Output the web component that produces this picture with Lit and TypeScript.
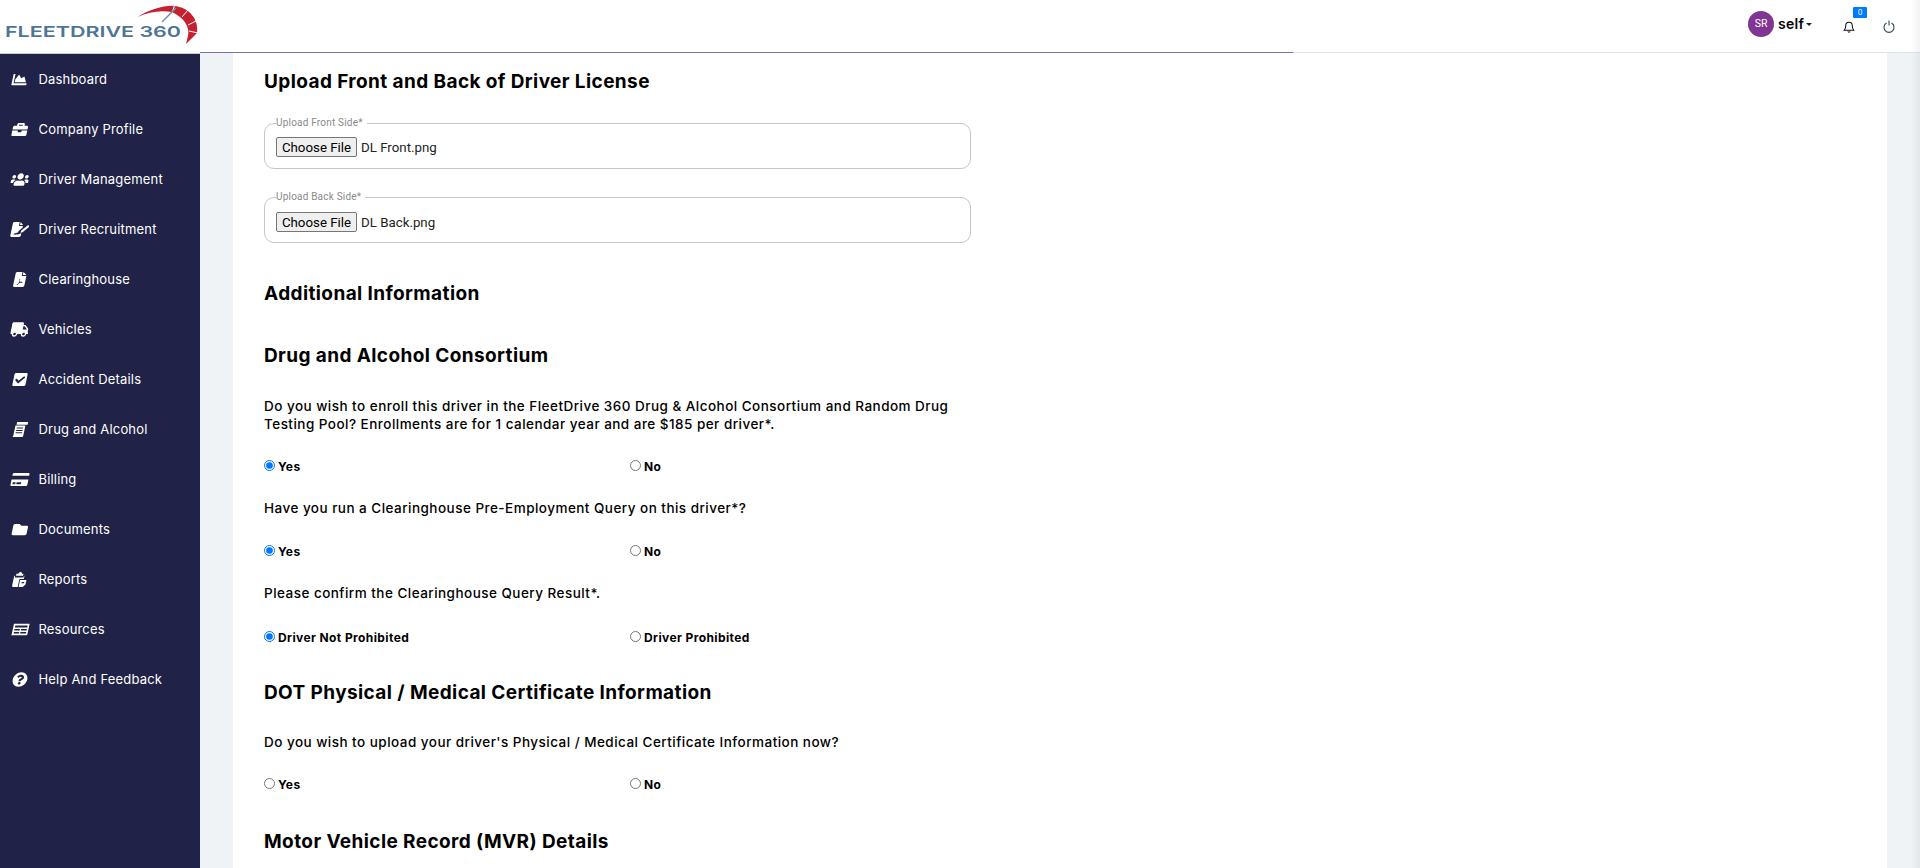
import { LitElement, html, css, svg } from 'lit';
import { customElement } from 'lit/decorators.js';

type NavItem = {
  name: string
  box: string
  icon: ReturnType<typeof svg>
}

const nav: NavItem[] = [
  { name: 'Dashboard', box: '0 0 512 512', icon: svg`<path d="M500 384c6.600 0 12 5.400 12 12v40c0 6.600-5.400 12-12 12H12c-6.600 0-12-5.400-12-12V76c0-6.600 5.400-12 12-12h40c6.600 0 12 5.400 12 12v308h436zM372.700 159.500L288 216l-85.300-113.700c-5.100-6.800-15.500-6.300-19.900 1L96 248v104h384l-89.900-187.800c-3.200-6.500-11.400-8.700-17.400-4.700z"/>` },
  { name: 'Company Profile', box: '0 0 512 512', icon: svg`<path d="M320 336c0 8.840-7.160 16-16 16h-96c-8.840 0-16-7.160-16-16v-48H0v144c0 25.600 22.400 48 48 48h416c25.600 0 48-22.400 48-48V288H320v48zm144-208h-80V80c0-25.600-22.400-48-48-48H176c-25.600 0-48 22.400-48 48v48H48c-25.600 0-48 22.400-48 48v80h512v-80c0-25.600-22.400-48-48-48zm-144 0H192V96h128v32z"/>` },
  { name: 'Driver Management', box: '0 0 640 512', icon: svg`<path d="M96 224c35.300 0 64-28.700 64-64s-28.700-64-64-64-64 28.700-64 64 28.700 64 64 64zm448 0c35.300 0 64-28.700 64-64s-28.700-64-64-64-64 28.700-64 64 28.700 64 64 64zm32 32h-64c-17.600 0-33.500 7.100-45.100 18.600 40.300 22.100 68.900 62 75.100 109.400h66c17.700 0 32-14.300 32-32v-32c0-35.300-28.700-64-64-64zm-256 0c61.900 0 112-50.100 112-112S381.900 32 320 32 208 82.100 208 144s50.100 112 112 112zm76.800 32h-8.300c-20.800 10-43.900 16-68.500 16s-47.600-6-68.500-16h-8.300C179.600 288 128 339.600 128 403.200V432c0 26.500 21.500 48 48 48h288c26.500 0 48-21.500 48-48v-28.800c0-63.600-51.600-115.200-115.200-115.200zm-223.700-13.400C161.500 263.100 145.600 256 128 256H64c-35.300 0-64 28.700-64 64v32c0 17.700 14.300 32 32 32h65.900c6.300-47.400 34.900-87.300 75.200-109.400z"/>` },
  { name: 'Driver Recruitment', box: '0 0 576 512', icon: svg`<path d="M0 48C0 22 22 0 48 0h176v112c0 13 11 24 24 24h112v60L250 306l-8 60c-30-18-50 0-62 30-14-24-40-30-60 0l-20 30 30 12 18-20c14 22 36 30 56 4 18 8 44 8 70-2l86-34v78c0 26-22 48-48 48H48c-26 0-48-22-48-48zM256 0l104 104H256zM566 130c14 14 14 36 0 50l-170 170-70 14 14-70 170-170c14-14 36-14 50 0z"/>` },
  { name: 'Clearinghouse', box: '0 0 384 512', icon: svg`<path fill-rule="evenodd" d="M48 0h176v112c0 13 11 24 24 24h136v328c0 26-22 48-48 48H48c-26 0-48-22-48-48V48C0 22 22 0 48 0zM256 0l128 104H256zM190 230c-16 0-20 20-6 60 8 24 4 50-14 90-30 18-62 40-50 56 16 14 44-16 66-56 36-12 70-16 90-14 24 4 32-20 10-28-26-6-60 2-78-12-16-22-4-96-18-96z"/>` },
  { name: 'Vehicles', box: '0 0 640 512', icon: svg`<path d="M624 352h-16V243.900c0-12.700-5.100-24.900-14.100-33.900L494 110.100c-9-9-21.200-14.100-33.900-14.100H416V48c0-26.500-21.500-48-48-48H48C21.500 0 0 21.500 0 48v320c0 26.500 21.500 48 48 48h16c0 53 43 96 96 96s96-43 96-96h128c0 53 43 96 96 96s96-43 96-96h48c8.800 0 16-7.200 16-16v-32c0-8.800-7.200-16-16-16zM160 464c-26.500 0-48-21.500-48-48s21.500-48 48-48 48 21.500 48 48-21.500 48-48 48zm320 0c-26.500 0-48-21.500-48-48s21.500-48 48-48 48 21.500 48 48-21.500 48-48 48zm80-208H416V144h44.100l99.900 99.900V256z"/>` },
  { name: 'Accident Details', box: '0 0 448 512', icon: svg`<path d="M400 480H48c-26.510 0-48-21.490-48-48V80c0-26.510 21.490-48 48-48h352c26.510 0 48 21.490 48 48v352c0 26.510-21.490 48-48 48zm-204.686-98.059l184-184c6.248-6.248 6.248-16.379 0-22.627l-22.627-22.627c-6.248-6.248-16.379-6.249-22.628 0L184 302.745l-70.059-70.059c-6.248-6.248-16.379-6.248-22.628 0l-22.627 22.627c-6.248 6.248-6.248 16.379 0 22.627l104 104c6.249 6.250 16.379 6.250 22.628.001z"/>` },
  { name: 'Drug and Alcohol', box: '0 0 448 512', icon: svg`<path fill-rule="evenodd" d="M70 0h378v90H70zM40 120h340v350c0 24-20 42-44 42H0c24 0 40-18 40-42zM100 190v34h220v-34zM100 270v34h220v-34zM100 350v34h220v-34z"/>` },
  { name: 'Billing', box: '0 0 576 512', icon: svg`<path d="M0 432c0 26.500 21.500 48 48 48h480c26.500 0 48-21.500 48-48V256H0v176zm192-68c0-6.600 5.400-12 12-12h136c6.600 0 12 5.400 12 12v40c0 6.600-5.400 12-12 12H204c-6.600 0-12-5.400-12-12v-40zm-128 0c0-6.600 5.400-12 12-12h72c6.600 0 12 5.400 12 12v40c0 6.600-5.400 12-12 12H76c-6.600 0-12-5.400-12-12v-40zM576 80v48H0V80c0-26.500 21.500-48 48-48h480c26.500 0 48 21.500 48 48z"/>` },
  { name: 'Documents', box: '0 0 512 512', icon: svg`<path d="M464 128H272l-64-64H48C21.490 64 0 85.490 0 112v288c0 26.510 21.490 48 48 48h416c26.510 0 48-21.490 48-48V176c0-26.510-21.490-48-48-48z"/>` },
  { name: 'Reports', box: '0 0 448 512', icon: svg`<path fill-rule="evenodd" d="M60 60h70C130 26 156 0 190 0s60 26 60 60h50v70H60zM0 130h30v60h300v-60h20v110H230c-20 0-30 10-30 30v242H40c-22 0-40-18-40-40zM230 270h218v160l-80 82H230zM300 340v40h90v-40z"/>` },
  { name: 'Resources', box: '0 0 576 512', icon: svg`<path fill-rule="evenodd" d="M40 60h536v350c0 26-20 46-46 46H0c26 0 40-20 40-46zM100 120v70h420v-70zM100 240v50h180v-50zM320 240v50h200v-50zM100 340v50h180v-50zM320 340v50h200v-50z"/>` },
  { name: 'Help And Feedback', box: '0 0 512 512', icon: svg`<path d="M504 256c0 136.997-111.043 248-248 248S8 392.997 8 256C8 119.083 119.043 8 256 8s248 111.083 248 248zM262.655 90c-54.497 0-89.255 22.957-116.549 63.758-3.536 5.286-2.353 12.415 2.715 16.258l34.699 26.311c5.205 3.947 12.621 3.008 16.665-2.122 17.864-22.658 30.113-35.797 57.303-35.797 20.429 0 45.698 13.148 45.698 32.958 0 14.976-12.363 22.667-32.534 33.976C247.128 238.528 216 254.941 216 296v4c0 6.627 5.373 12 12 12h56c6.627 0 12-5.373 12-12v-1.333c0-28.462 83.186-29.647 83.186-106.667 0-58.002-60.165-102-116.531-102zM256 338c-25.365 0-46 20.635-46 46 0 25.364 20.635 46 46 46s46-20.636 46-46c0-25.365-20.635-46-46-46z"/>` },
]

@customElement('app-root')
export class AppRoot extends LitElement {

  static styles = css`
    :host {
      display: block;
      position: relative;
      height: 868px;
      overflow: hidden;
      background: #fff;
      font-family: Inter, "Open Sans", sans-serif;
      color: #000;
    }
    :host * {
      box-sizing: border-box;
    }

    /* soft shade down the right edge of the window */
    .edge {
      position: absolute;
      top: 0;
      right: 0;
      bottom: 0;
      width: 9px;
      z-index: 2;
      background: linear-gradient(to right, rgba(0, 0, 0, 0), rgba(0, 0, 0, 0.05));
      pointer-events: none;
    }

    .header {
      display: flex;
      height: 53px;
      position: relative;
      z-index: 1;
    }
    .brand {
      width: 200px;
      height: 54px;
      flex: none;
      background: #fff;
      border-bottom: 1px solid #ccc;
    }
    .brand svg {
      display: block;
    }
    .logo-text {
      font-family: Inter, sans-serif;
      font-weight: 600;
      font-size: 15px;
      fill: #4f7595;
    }
    .topbar {
      flex: 1;
      display: flex;
      align-items: center;
      justify-content: flex-end;
      border-bottom: 1px solid #dde4ea;
      position: relative;
      padding-right: 25px;
    }
    .progress {
      position: absolute;
      left: 0;
      bottom: -1px;
      width: 1093px;
      height: 1px;
      background: #7a71ae;
    }
    .avatar {
      width: 26px;
      height: 26px;
      border-radius: 50%;
      background: #7f3592;
      color: #fff;
      font-family: Roboto, sans-serif;
      font-size: 10.5px;
      display: flex;
      align-items: center;
      justify-content: center;
      margin-top: -5px;
    }
    .self {
      width: 25px;
      font-size: 14px;
      font-weight: 600;
      letter-spacing: 0.3px;
      margin: -5px 0 0 4px;
    }
    .caret {
      width: 0;
      height: 0;
      border: 3px solid transparent;
      border-top: 3px solid #222;
      border-bottom: 0;
      margin: -4px 0 0 3px;
    }
    .bell {
      position: relative;
      margin-left: 31px;
      display: flex;
    }
    .badge {
      position: absolute;
      left: 10px;
      top: -13px;
      width: 14px;
      height: 11px;
      border-radius: 1px;
      background: #007bff;
      color: #fff;
      font-size: 7.5px;
      line-height: 11px;
      text-align: center;
    }
    .power {
      margin-left: 28px;
      display: flex;
    }

    .body {
      display: flex;
      height: 815px;
    }
    .sidebar {
      width: 200px;
      flex: none;
      margin-top: 1px;
      background: #202347;
    }
    .nav-item {
      display: flex;
      align-items: center;
      height: 50px;
      padding-left: 11px;
      color: #fff;
      font-size: 13px;
      letter-spacing: 0.18px;
    }
    .nav-icon {
      width: 27.5px;
      flex: none;
      display: flex;
    }
    .nav-icon svg {
      width: 18px;
      height: 15px;
      fill: #fff;
      transform: skewX(-12deg);
    }

    .main {
      flex: 1;
      background: #eff3f6;
      padding: 0 33px;
    }
    .card {
      height: 100%;
      background: #fff;
      padding: 18px 0 0 31px;
    }

    h2 {
      margin: 40px 0 0;
      font-size: 19px;
      line-height: 22px;
      font-weight: 700;
      letter-spacing: 0.4px;
    }
    h2.first {
      margin-top: 0;
    }
    h2.dot {
      margin-top: 36px;
    }
    h2.mvr {
      margin-top: 38px;
    }
    .q {
      margin: 24px 0 0;
      font-size: 13.5px;
      line-height: 18px;
      font-weight: 500;
      letter-spacing: 0.47px;
      white-space: nowrap;
    }
    .q.lead {
      margin-top: 30px;
    }
    .q.dot {
      margin-top: 29px;
    }

    fieldset {
      width: 707px;
      height: 52px;
      margin: 22px 0 0;
      padding: 0 11px;
      border: 1px solid #c6c6c6;
      border-radius: 10px;
      display: flex;
      align-items: center;
    }
    fieldset.top {
      margin-top: 24px;
    }
    legend {
      padding: 0 4px 0 0;
      margin-left: 0;
      font-family: Roboto, sans-serif;
      font-size: 10px;
      line-height: 12px;
      color: #8a8a8a;
      letter-spacing: 0.2px;
    }
    .file-row {
      display: flex;
      align-items: center;
      margin-top: -1px;
      font-family: Roboto, sans-serif;
      font-size: 13.3px;
      color: #222;
    }
    fieldset.top .file-row {
      margin-top: -3px;
    }
    .file-btn {
      width: 81px;
      height: 20px;
      padding: 0;
      margin-right: 4px;
      border: 1px solid #767676;
      border-radius: 2px;
      background: #efefef;
      color: #000;
      font: inherit;
    }

    .radios {
      display: grid;
      grid-template-columns: 366px 366px;
      margin-top: 24px;
      height: 18px;
      align-items: center;
    }
    .radios.wide {
      margin-top: 25px;
    }
    .radios.widest {
      margin-top: 26px;
    }
    .radios label {
      display: flex;
      align-items: center;
      font-size: 12px;
      font-weight: 700;
      letter-spacing: 0.4px;
    }
    .radios input {
      width: 11px;
      height: 11px;
      margin: -2px 3px 0 0;
    }
  `;

  renderRadios(name: string, a: string, b: string, checked: boolean, cls = '') {
    return html`
      <div class="radios ${cls}">
        <label><input type="radio" name=${name} ?checked=${checked} />${a}</label>
        <label><input type="radio" name=${name} />${b}</label>
      </div>
    `
  }

  renderUpload(label: string, file: string, top = false) {
    return html`
      <fieldset class=${top ? 'top' : ''}>
        <legend>${label}</legend>
        <div class="file-row"><button class="file-btn">Choose File</button>${file}</div>
      </fieldset>
    `
  }

  render() {
    return html`
      <div class="edge"></div>
      <div class="header">
        <div class="brand">
          <svg width="200" height="53" viewBox="0 0 200 53">
            <text class="logo-text" x="5" y="36.500" textLength="176" lengthAdjust="spacingAndGlyphs">FLEETDRIVE 360</text>
            <path d="M138 17C150 9 165 5 175 6C190 8 199 20 197 33L186 44L188 36C190 28 185 18 172 12C160 10 148 12 138 17Z" fill="#c5202f"/>
            <path d="M175 4L172 13M188 10L182 17M196 21L188 25M198 33L189 31" stroke="#fff" stroke-width="1" fill="none"/>
            <path d="M162 22L176 8" stroke="#6f8fa9" stroke-width="1.500" fill="none"/>
          </svg>
        </div>
        <div class="topbar">
          <div class="progress"></div>
          <div class="avatar">SR</div>
          <div class="self">self</div>
          <div class="caret"></div>
          <div class="bell">
            <svg width="12" height="13" viewBox="0 0 12 14" fill="none" stroke="#111" stroke-width="1.100">
              <path d="M1 11c1-1 1.500-2 1.500-5a3.500 3.500 0 0 1 7 0c0 3 .5 4 1.500 5z"/>
              <path d="M4.700 12.300a1.400 1.400 0 0 0 2.600 0"/>
            </svg>
            <div class="badge">0</div>
          </div>
          <div class="power">
            <svg width="12" height="13" viewBox="0 0 12 13" fill="none" stroke="#33475b" stroke-width="1.100">
              <path d="M3.500 3a5 5 0 1 0 5 0"/>
              <path d="M6 .5v5"/>
            </svg>
          </div>
        </div>
      </div>
      <div class="body">
        <nav class="sidebar">
          ${nav.map(o => html`
            <div class="nav-item">
              <span class="nav-icon"><svg viewBox=${o.box}>${o.icon}</svg></span>${o.name}
            </div>
          `)}
        </nav>
        <div class="main">
          <div class="card">
            <h2 class="first">Upload Front and Back of Driver License</h2>
            ${this.renderUpload('Upload Front Side*', 'DL Front.png', true)}
            ${this.renderUpload('Upload Back Side*', 'DL Back.png')}

            <h2>Additional Information</h2>
            <h2>Drug and Alcohol Consortium</h2>
            <p class="q lead">Do you wish to enroll this driver in the FleetDrive 360 Drug &amp; Alcohol Consortium and Random Drug<br />Testing Pool? Enrollments are for 1 calendar year and are $185 per driver*.</p>
            ${this.renderRadios('enroll', 'Yes', 'No', true)}
            <p class="q">Have you run a Clearinghouse Pre-Employment Query on this driver*?</p>
            ${this.renderRadios('query', 'Yes', 'No', true, 'wide')}
            <p class="q">Please confirm the Clearinghouse Query Result*.</p>
            ${this.renderRadios('result', 'Driver Not Prohibited', 'Driver Prohibited', true, 'widest')}

            <h2 class="dot">DOT Physical / Medical Certificate Information</h2>
            <p class="q dot">Do you wish to upload your driver's Physical / Medical Certificate Information now?</p>
            ${this.renderRadios('medical', 'Yes', 'No', false)}

            <h2 class="mvr">Motor Vehicle Record (MVR) Details</h2>
          </div>
        </div>
      </div>
    `
  }
}
